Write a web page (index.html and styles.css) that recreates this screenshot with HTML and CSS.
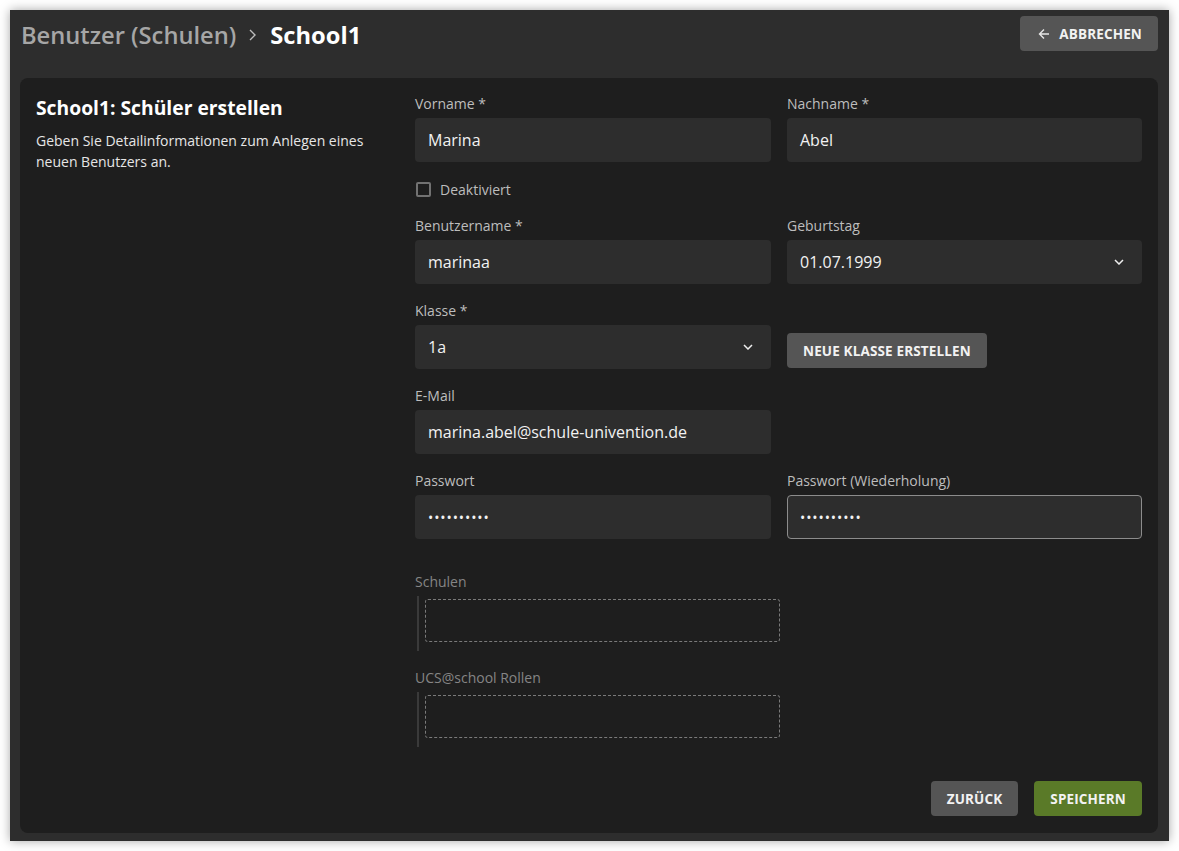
FILE: index.html
```html
<!DOCTYPE html>
<html lang="de">
<head>
<meta charset="utf-8">
<title>School1</title>
<link rel="stylesheet" href="styles.css">
</head>
<body>
<div class="window">
  <header class="topbar">
    <h1 class="crumbs">
      <span class="crumb-parent">Benutzer (Schulen)</span>
      <svg class="crumb-sep" width="12" height="14" viewBox="0 0 12 14"><path d="M3 2 L8 7 L3 12" fill="none" stroke="#bdbdbd" stroke-width="1.4"/></svg>
      <span class="crumb-current">School1</span>
    </h1>
    <button class="btn btn-gray btn-cancel">
      <svg width="12" height="12" viewBox="0 0 12 12"><path d="M11 6 H1.5 M6 1.5 L1.5 6 L6 10.5" fill="none" stroke="#e6e6e6" stroke-width="1.4"/></svg>
      ABBRECHEN
    </button>
  </header>

  <main class="card">
    <section class="intro">
      <h2 class="intro-title">School1: Schüler erstellen</h2>
      <p class="intro-text">Geben Sie Detailinformationen zum Anlegen eines neuen Benutzers an.</p>
    </section>

    <section class="form">
      <div class="row">
        <div class="field">
          <label class="label">Vorname *</label>
          <div class="input">Marina</div>
        </div>
        <div class="field">
          <label class="label">Nachname *</label>
          <div class="input">Abel</div>
        </div>
      </div>

      <div class="check-row">
        <span class="checkbox"></span>
        <span class="check-label">Deaktiviert</span>
      </div>

      <div class="row">
        <div class="field">
          <label class="label">Benutzername *</label>
          <div class="input">marinaa</div>
        </div>
        <div class="field">
          <label class="label">Geburtstag</label>
          <div class="input select">01.07.1999
            <svg class="chev" width="10" height="6" viewBox="0 0 10 6"><path d="M1 1 L5 5 L9 1" fill="none" stroke="#eeeeee" stroke-width="1.5"/></svg>
          </div>
        </div>
      </div>

      <div class="row gap-top">
        <div class="field">
          <label class="label">Klasse *</label>
          <div class="input select">1a
            <svg class="chev" width="10" height="6" viewBox="0 0 10 6"><path d="M1 1 L5 5 L9 1" fill="none" stroke="#eeeeee" stroke-width="1.5"/></svg>
          </div>
        </div>
        <div class="field field-end">
          <button class="btn btn-gray btn-newclass">NEUE KLASSE ERSTELLEN</button>
        </div>
      </div>

      <div class="row gap-top">
        <div class="field">
          <label class="label">E-Mail</label>
          <div class="input">marina.abel@schule-univention.de</div>
        </div>
        <div></div>
      </div>

      <div class="row gap-top">
        <div class="field">
          <label class="label">Passwort</label>
          <div class="input"><span class="dots">••••••••••</span></div>
        </div>
        <div class="field">
          <label class="label">Passwort (Wiederholung)</label>
          <div class="input focused"><span class="dots">••••••••••</span></div>
        </div>
      </div>

      <div class="row multi-first">
        <div class="field">
          <label class="label dim">Schulen</label>
          <div class="multi"><div class="dashed"></div></div>
        </div>
        <div></div>
      </div>

      <div class="row gap-top">
        <div class="field">
          <label class="label dim">UCS@school Rollen</label>
          <div class="multi"><div class="dashed"></div></div>
        </div>
        <div></div>
      </div>

      <div class="actions">
        <button class="btn btn-gray">ZURÜCK</button>
        <button class="btn btn-green">SPEICHERN</button>
      </div>
    </section>
  </main>
</div>
</body>
</html>
```

FILE: styles.css
```css
* { box-sizing: border-box; }

html, body {
  margin: 0;
  padding: 0;
  background: #ffffff;
}

body {
  font-family: "Open Sans", "Noto Sans", sans-serif;
  color: #eeeeee;
}

.window {
  margin: 10px;
  width: 1159px;
  height: 831px;
  background: #2d2d2d;
  box-shadow: 0 0 10px rgba(0, 0, 0, 0.35);
  display: flex;
  flex-direction: column;
  padding: 0 11px 8px 10px;
}

.topbar {
  height: 50px;
  display: flex;
  align-items: center;
  justify-content: space-between;
  padding: 0 0 0 1px;
}

.crumbs {
  margin: 0;
  display: flex;
  align-items: center;
  font-size: 23.7px;
  font-weight: 700;
  line-height: 30px;
}

.crumb-parent { color: #a6a6a6; font-weight: 600; }
.crumb-sep { margin: 0 11px 0 11px; }
.crumb-current { color: #ffffff; }

.btn {
  font-family: "Open Sans", "Noto Sans", sans-serif;
  font-size: 13.5px;
  font-weight: 700;
  color: #f2f2f2;
  border: none;
  border-radius: 4px;
  height: 35px;
  padding: 0 16px;
  display: inline-flex;
  align-items: center;
  justify-content: center;
  letter-spacing: 0.15px;
  cursor: pointer;
}

.btn-gray { background: #555555; }
.btn-green { background: #5a7a28; }

.btn-cancel {
  gap: 9px;
  padding: 0 16px 0 18px;
  margin-top: -3px;
}

.card {
  margin-top: 18px;
  flex: 1;
  background: #1e1e1e;
  border-radius: 8px;
  padding: 16px 16px 17px 16px;
  display: flex;
}

.intro {
  width: 379px;
  padding-right: 34px;
  flex: none;
}

.intro-title {
  margin: 1px 0 0 0;
  font-size: 19.3px;
  font-weight: 700;
  line-height: 26px;
  color: #ffffff;
}

.intro-text {
  margin: 9px 0 0 0;
  font-size: 14px;
  line-height: 21px;
  color: #e6e6e6;
}

.form {
  flex: 1;
  display: flex;
  flex-direction: column;
}

.row {
  display: grid;
  grid-template-columns: 356px 355px;
  column-gap: 16px;
}

.gap-top { margin-top: 17px; }
.multi-first { margin-top: 33px; }

.field {
  display: flex;
  flex-direction: column;
}

.field-end {
  justify-content: flex-end;
  align-items: flex-start;
  padding-bottom: 1px;
}

.label {
  display: block;
  font-size: 14px;
  line-height: 20px;
  height: 20px;
  color: #bdbdbd;
  margin-bottom: 4px;
}

.label.dim { color: #858585; }

.input {
  height: 44px;
  background: #2d2d2d;
  border-radius: 4px;
  display: flex;
  align-items: center;
  font-size: 16px;
  color: #f2f2f2;
  border: 1px solid transparent;
  padding: 0 13px 0 12px;
}

.input.focused { border-color: #8c8c8c; }

.select { justify-content: space-between; padding-right: 17px; }
.chev { flex: none; }

.dots {
  font-size: 14px;
  letter-spacing: 0.9px;
  line-height: 1;
  padding-top: 1px;
}

.check-row {
  height: 54px;
  display: flex;
  align-items: center;
  padding-left: 1px;
}

.checkbox {
  width: 15px;
  height: 15px;
  border: 2px solid #727272;
  border-radius: 2px;
  margin-right: 9px;
}

.check-label {
  font-size: 14px;
  color: #bdbdbd;
}

.multi {
  margin-left: 2px;
  height: 55px;
  border-left: 2px solid #3a3a3a;
  padding: 3px 0 0 6px;
}

.dashed {
  width: 355px;
  height: 43px;
  border: 1px dashed #7a7a7a;
  border-radius: 3px;
}

.actions {
  margin-top: auto;
  display: flex;
  justify-content: flex-end;
  gap: 16px;
}
```
